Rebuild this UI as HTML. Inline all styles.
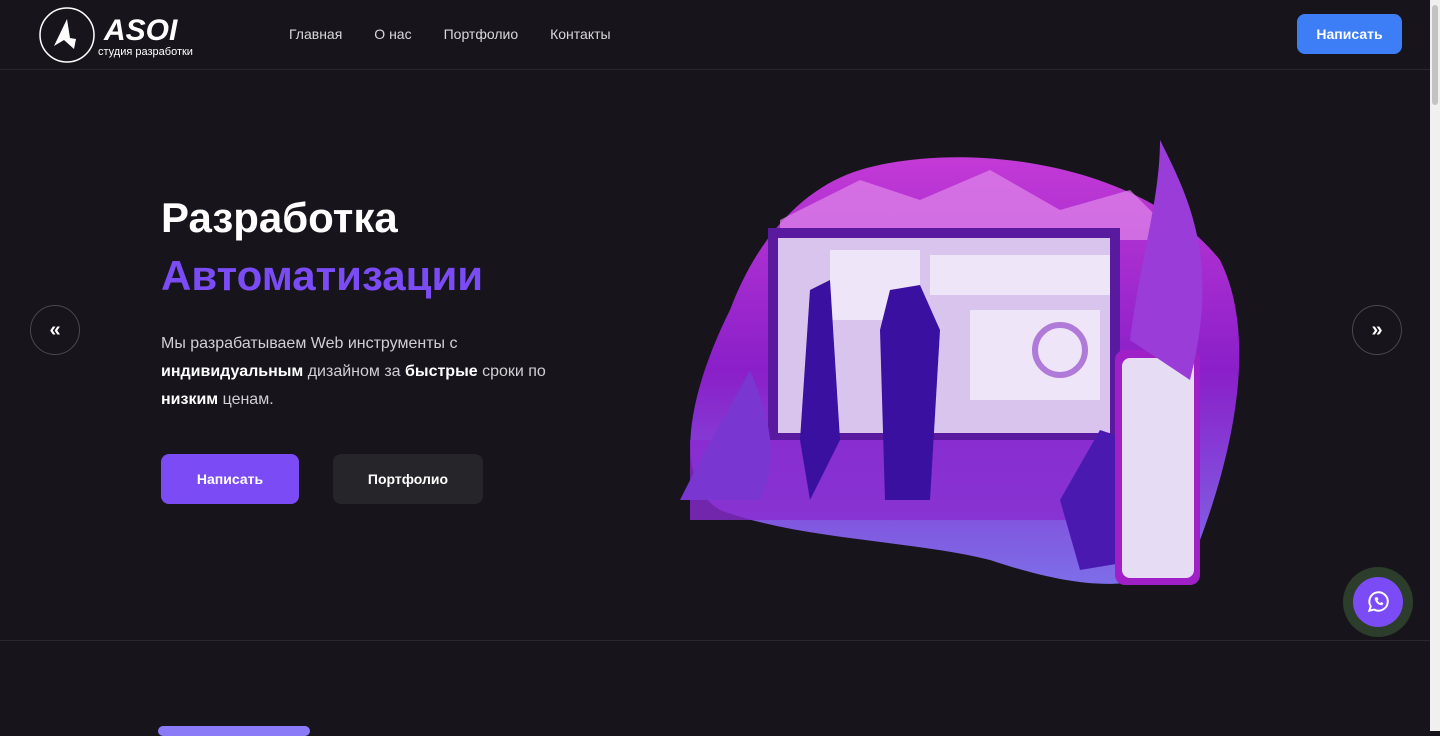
<!DOCTYPE html>
<html><head><meta charset="utf-8"><style>
*{margin:0;padding:0;box-sizing:border-box}
body{width:1440px;height:731px;overflow:hidden;background:#17151b;font-family:"Liberation Sans",sans-serif;color:#fff;position:relative}
.hdr{position:absolute;left:0;top:0;width:1430px;height:70px;border-bottom:1px solid #2a282e;background:#17151b}
.nav{position:absolute;top:26px;left:289px;display:flex;gap:32px;font-size:14px;color:#d8d8dc}
.btn1{position:absolute;left:1297px;top:14px;width:105px;height:40px;border-radius:8px;background:#3d7ef7;font-size:14px;font-weight:bold;display:flex;align-items:center;justify-content:center}
h1{position:absolute;left:161px;top:189px;font-size:42px;font-weight:bold;line-height:58px}
h1 span{color:#7b4cf6}
p.t{position:absolute;left:161px;top:330px;width:420px;font-size:16px;line-height:28px;color:#cfcfd4}
p.t b{color:#fff}
.b2{position:absolute;top:454px;height:50px;border-radius:8px;font-size:14px;font-weight:bold;display:flex;align-items:center;justify-content:center}
.arr{position:absolute;top:305px;width:50px;height:50px;border-radius:50%;border:1px solid #4a484e;display:flex;align-items:center;justify-content:center;font-size:20px;font-weight:bold}
.sb{position:absolute;right:0;top:0;width:10px;height:731px;background:#f0f0f0}
.sb div{margin:5px 2px;width:6px;height:100px;border-radius:3px;background:#c3c3c3}
</style></head><body>
<div class="hdr">
<svg style="position:absolute;left:38px;top:6px" width="160" height="58" viewBox="0 0 160 58">
<circle cx="29" cy="29" r="27" fill="none" stroke="#fff" stroke-width="1.5"/>
<path d="M29 13 L16 40 L26 34 L36 43 L38 33 L32 32 Z" fill="#fff"/>
<text x="66" y="34" font-family="Liberation Sans" font-size="30" font-weight="bold" fill="#fff" font-style="italic">ASOI</text>
<text x="60" y="49" font-family="Liberation Sans" font-size="11" fill="#fff">студия разработки</text>
</svg>
<div class="nav"><span>Главная</span><span>О нас</span><span>Портфолио</span><span>Контакты</span></div>
<div class="btn1">Написать</div>
</div>
<h1>Разработка<br><span>Автоматизации</span></h1>
<p class="t">Мы разрабатываем Web инструменты с <b>индивидуальным</b> дизайном за <b>быстрые</b> сроки по <b>низким</b> ценам.</p>
<div class="b2" style="left:161px;width:138px;background:#7b4cf6">Написать</div>
<div class="b2" style="left:333px;width:150px;background:#26252a">Портфолио</div>
<div class="arr" style="left:30px">«</div>
<div class="arr" style="left:1352px">»</div>
<svg style="position:absolute;left:660px;top:140px" width="590" height="460" viewBox="0 0 590 460">
<defs><linearGradient id="g" x1="0" y1="0" x2="0" y2="1"><stop offset="0" stop-color="#c33ad6"/><stop offset=".5" stop-color="#8a1fc9"/><stop offset="1" stop-color="#7d6ee8"/></linearGradient></defs>
<path d="M200 30 C300 0 480 20 560 120 C600 200 570 320 540 400 C500 460 420 450 330 420 C250 400 140 400 60 370 C10 340 30 250 70 170 C100 90 150 45 200 30Z" fill="url(#g)"/>
<path d="M120 80 L200 40 L260 60 L330 30 L400 70 L470 50 L520 100 L120 100Z" fill="#e088ea" opacity=".7"/>
<rect x="108" y="88" width="352" height="212" fill="#5a1aa0"/>
<rect x="118" y="98" width="332" height="195" fill="#d9c4ee"/>
<rect x="170" y="110" width="90" height="70" fill="#efe5f8"/><rect x="270" y="115" width="180" height="40" fill="#efe5f8"/>
<rect x="310" y="170" width="130" height="90" fill="#efe5f8"/><circle cx="400" cy="210" r="25" fill="none" stroke="#b07ad8" stroke-width="6"/>
<rect x="30" y="300" width="440" height="80" fill="#8a2ad0" opacity=".8"/>
<path d="M150 150 L170 140 L180 300 L150 360 L140 300Z" fill="#3a10a0"/>
<path d="M230 150 L260 145 L280 190 L270 360 L225 360 L220 190Z" fill="#3a10a0"/>
<path d="M400 360 L440 290 L470 300 L480 420 L420 430Z" fill="#4a1ab0"/>
<rect x="455" y="210" width="85" height="235" rx="10" fill="#a020c8"/><rect x="462" y="218" width="72" height="220" rx="8" fill="#e6dcf4"/>
<path d="M470 200 C480 120 500 60 500 0 C530 60 560 120 530 240Z" fill="#9a3cd8"/>
<path d="M20 360 C50 300 80 250 90 230 C110 280 120 320 100 360Z" fill="#7a36d0"/>
</svg>
<div style="position:absolute;left:0;top:640px;width:1430px;border-top:1px solid #2a282e"></div>
<div style="position:absolute;left:1343px;top:567px;width:70px;height:70px;border-radius:50%;background:#2c3d2b"></div>
<div style="position:absolute;left:1353px;top:577px;width:50px;height:50px;border-radius:50%;background:#7b4cf6;display:flex;align-items:center;justify-content:center">
<svg width="26" height="26" viewBox="0 0 24 24" fill="none" stroke="#fff" stroke-width="1.8"><path d="M4 20l1.3-4A8.5 8.5 0 1 1 8.5 19Z"/><path d="M9 8c0 4 3 7 7 7l1-2-2-1-1 1c-1-.5-2-1.5-2.5-2.5l1-1-1-2Z" fill="#fff" stroke="none"/></svg></div>
<div style="position:absolute;left:158px;top:726px;width:152px;height:10px;border-radius:8px;background:#8c7bf7"></div>
<div class="sb"><div></div></div>
</body></html>
